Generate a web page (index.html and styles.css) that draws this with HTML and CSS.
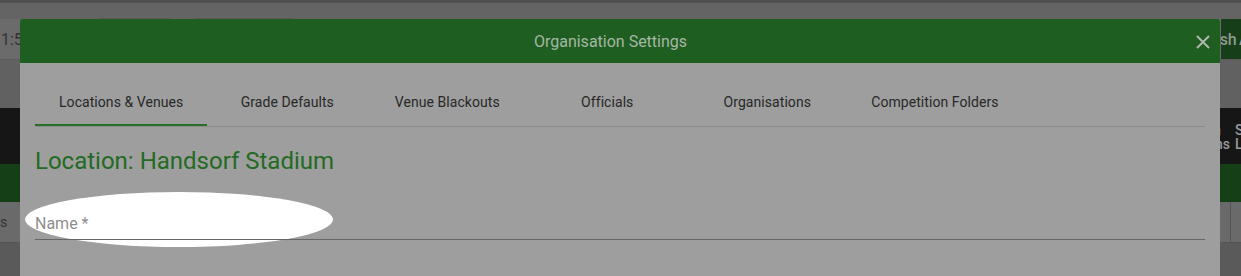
FILE: index.html
```html
<!DOCTYPE html>
<html lang="en">
<head>
<meta charset="utf-8">
<title>Organisation Settings</title>
<link rel="stylesheet" href="styles.css">
</head>
<body>
<div class="page">
  <div class="top-edge"></div>
  <div class="tab-strip">
    <span class="strip-tab strip-tab-a"></span>
    <span class="strip-tab strip-tab-b"></span>
  </div>
  <div class="toolbar">
    <span class="clock">1:55</span>
    <span class="publish">Publish All</span>
  </div>
  <div class="subbar"></div>
  <div class="dark-band">
    <div class="dark-items">
      <div class="dark-item first"><span class="orange">n</span><span>ns</span></div>
      <div class="dark-item"><span>S</span><span>L</span></div>
    </div>
  </div>
  <div class="green-band"></div>
  <div class="grid-row">
    <span class="cell-text">s</span>
    <span class="cell-divider"></span>
  </div>
  <div class="page-rest"></div>

  <div class="modal">
    <div class="modal-header">
      <div class="modal-title">Organisation Settings</div>
      <button class="modal-close" aria-label="Close">
        <svg viewBox="0 0 14 14" width="14" height="14"><path d="M1 1 L13 13 M13 1 L1 13" stroke="#aeb8ae" stroke-width="2" fill="none"/></svg>
      </button>
    </div>
    <div class="modal-body">
      <div class="tabs">
        <div class="tab active">Locations &amp; Venues</div>
        <div class="tab">Grade Defaults</div>
        <div class="tab">Venue Blackouts</div>
        <div class="tab">Officials</div>
        <div class="tab">Organisations</div>
        <div class="tab">Competition Folders</div>
      </div>
      <h2 class="location-title">Location: Handsorf Stadium</h2>
      <div class="field">
        <span class="highlight"></span>
        <div class="field-input">Name *</div>
      </div>
    </div>
  </div>
</div>
</body>
</html>
```

FILE: styles.css
```css
* { box-sizing: border-box; }
html, body { margin: 0; padding: 0; }
body {
  font-family: Roboto, "Liberation Sans", sans-serif;
  background: #5a5a5a;
  width: 1241px;
  height: 276px;
  overflow: hidden;
}
.page {
  position: relative;
  display: flex;
  flex-direction: column;
  height: 276px;
}
.top-edge { height: 3px; background: #505050; }
.tab-strip {
  height: 16px;
  background: #646464;
  display: flex;
  align-items: flex-end;
}
.strip-tab { height: 1px; background: #5a5a5a; }
.strip-tab-a { margin-left: 100px; width: 70px; }
.strip-tab-b { margin-left: 24px; width: 100px; }
.toolbar {
  height: 41px;
  background: #6b6b6b;
  border-bottom: 1px solid #5a5a5a;
  display: flex;
  align-items: center;
  justify-content: space-between;
}
.clock {
  font-size: 16px;
  color: #333;
  margin-left: 1px;
}
.publish {
  align-self: stretch;
  display: flex;
  align-items: center;
  justify-content: flex-start;
  background: #163e19;
  color: #8e9a8e;
  font-size: 16px;
  font-weight: 500;
  letter-spacing: -0.3px;
  word-spacing: -1px;
  width: 120px;
  margin-right: -100px;
  padding-left: 2px;
  white-space: nowrap;
  overflow: hidden;
  text-indent: -38px;
}
.subbar { height: 48px; background: #616161; }
.dark-band {
  height: 56px;
  background: #161616;
  display: flex;
  justify-content: flex-end;
}
.dark-items {
  display: flex;
  gap: 5px;
  padding-top: 15px;
}
.dark-item {
  display: flex;
  flex-direction: column;
  font-size: 14px;
  font-weight: 500;
  line-height: 14px;
  color: #9a9a9a;
  width: 6px;
}
.dark-item.first {
  width: auto;
  align-items: flex-end;
}
.dark-item.first .orange { padding-right: 9px; }
.dark-item .orange { color: #9a7412; }
.green-band { height: 38px; background: #143f17; }
.grid-row {
  height: 41px;
  background: #6a6a6a;
  border-bottom: 1px solid #555;
  display: flex;
  align-items: center;
  justify-content: space-between;
}
.cell-text { font-size: 14px; color: #333; }
.cell-divider { width: 1px; align-self: stretch; background: #555; margin-right: 10px; }
.page-rest { flex: 1; background: #5a5a5a; }

.modal {
  position: absolute;
  left: 20px;
  top: 19px;
  width: 1200px;
  height: 270px;
  background: #9e9e9e;
  border-radius: 2px 2px 0 0;
  overflow: hidden;
}
.modal-header {
  height: 44px;
  background: #1e5e20;
  display: flex;
  align-items: center;
  padding-left: 5px;
  padding-right: 10px;
}
.modal-title {
  flex: 1;
  text-align: center;
  color: #a6b6a6;
  font-size: 16px;
}
.modal-close {
  width: 14px;
  height: 14px;
  padding: 0;
  border: 0;
  background: none;
  display: flex;
  margin-top: 2px;
}
.modal-body { padding: 16px 15px 0; }
.tabs {
  display: flex;
  height: 48px;
  border-bottom: 1px solid #8a8a8a;
}
.tab {
  position: relative;
  min-width: 160px;
  padding: 0 24px 2px;
  display: flex;
  align-items: center;
  justify-content: center;
  font-size: 14px;
  letter-spacing: 0.06px;
  color: #282828;
  white-space: nowrap;
}
.tab.active::after {
  content: "";
  position: absolute;
  left: 0;
  right: 0;
  bottom: 0;
  height: 2px;
  background: #26702a;
}
.location-title {
  margin: 20px 0 0;
  font-size: 24px;
  font-weight: 400;
  line-height: 29px;
  color: #236a23;
}
.field {
  position: relative;
  margin-top: 38px;
}
.highlight {
  position: absolute;
  left: -10px;
  top: -22px;
  width: 308px;
  height: 55px;
  border-radius: 50%;
  background: #ffffff;
}
.field-input {
  position: relative;
  font-size: 16px;
  line-height: 19px;
  color: #8e8e8e;
  padding-bottom: 6px;
  border-bottom: 1px solid #666;
}
```
